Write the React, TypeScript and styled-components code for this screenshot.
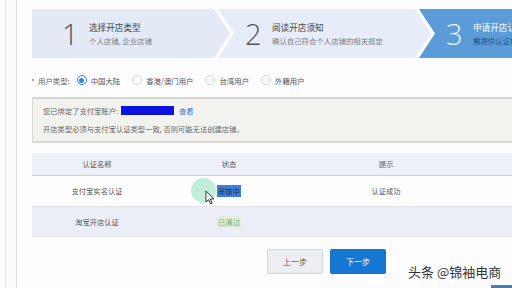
import React from "react";
import styled, { createGlobalStyle } from "styled-components";

const Global = createGlobalStyle`
  html, body { margin: 0; padding: 0; background: #fdfcfe; }
  body {
    width: 512px; height: 288px; overflow: hidden;
    font-family: "Noto Sans CJK SC", "Noto Sans", sans-serif;
    color: #555;
  }
  * { box-sizing: border-box; }
`;

const Page = styled.div`
  position: relative;
  display: flex;
  width: 512px;
  height: 288px;
  overflow: hidden;
`;

const Rail = styled.div`
  flex: 0 0 32px;
  padding-left: 5px;
`;

const RailInner = styled.div`
  width: 12px;
  height: 100%;
  border-left: 1px solid #e2e2e6;
  border-right: 1px solid #dcdce2;
  background: #fbfbfc;
`;

const Main = styled.div`
  flex: 1;
  min-width: 0;
  padding-top: 9px;
  display: flex;
  flex-direction: column;
`;

const Steps = styled.div`
  display: flex;
  height: 49px;
  width: 520px;
`;

const Step = styled.div<{ $w: number; $first?: boolean; $active?: boolean; $bg: string }>`
  flex: 0 0 ${(p) => p.$w}px;
  margin-left: ${(p) => (p.$first ? 0 : -12)}px;
  height: 100%;
  background: ${(p) => p.$bg};
  display: flex;
  align-items: center;
  padding-left: ${(p) => (p.$first ? 30 : 27)}px;
  clip-path: ${(p) =>
    p.$first
      ? "polygon(0 0, calc(100% - 16px) 0, 100% 50%, calc(100% - 16px) 100%, 0 100%)"
      : "polygon(0 0, calc(100% - 16px) 0, 100% 50%, calc(100% - 16px) 100%, 0 100%, 16px 50%)"};
`;

const StepNum = styled.div<{ $active?: boolean }>`
  font-family: "Open Sans", "Noto Sans", sans-serif;
  font-weight: 300;
  font-size: 29px;
  line-height: 1;
  width: 19px;
  margin-right: 8px;
  color: ${(p) => (p.$active ? "#e6f3ff" : "#555")};
`;

const StepText = styled.div`
  display: flex;
  flex-direction: column;
  gap: 3px;
  white-space: nowrap;
`;

const StepTitle = styled.div<{ $active?: boolean }>`
  font-size: 8.6px;
  line-height: 11px;
  color: ${(p) => (p.$active ? "#ffffff" : "#444")};
`;

const StepSub = styled.div<{ $active?: boolean }>`
  font-size: 7.4px;
  line-height: 10px;
  color: ${(p) => (p.$active ? "#234f86" : "#7a7a80")};
`;

const TypeRow = styled.div`
  margin-top: 14px;
  height: 16px;
  display: flex;
  align-items: center;
  font-size: 7.4px;
  color: #555;
  white-space: nowrap;
`;

const Bullet = styled.span`
  width: 2px;
  height: 2px;
  border-radius: 50%;
  background: #888;
  margin-right: 4px;
`;

const TypeLabel = styled.span`
  margin-right: 7px;
  color: #666;
`;

const RadioItem = styled.label<{ $gap: number }>`
  display: flex;
  align-items: center;
  margin-right: ${(p) => p.$gap}px;
`;

const Radio = styled.span<{ $on?: boolean }>`
  width: 10px;
  height: 10px;
  border-radius: 50%;
  border: 1px solid ${(p) => (p.$on ? "#2f86e0" : "#d4d6da")};
  margin-right: 4px;
  display: flex;
  align-items: center;
  justify-content: center;
  &::after {
    content: "";
    width: 5px;
    height: 5px;
    border-radius: 50%;
    background: ${(p) => (p.$on ? "#2f86e0" : "transparent")};
  }
`;

const Notice = styled.div`
  margin-top: 9px;
  height: 46px;
  width: 500px;
  background: #f2f3ee;
  border-top: 2px solid #d4d6cf;
  border-bottom: 2px solid #d9dbd4;
  border-left: 1px solid #d8dad3;
  padding: 5px 0 0 10px;
  font-size: 7.3px;
  color: #666;
  display: flex;
  flex-direction: column;
  gap: 5px;
`;

const NoticeLine = styled.div`
  display: flex;
  align-items: center;
  height: 13px;
  white-space: nowrap;
`;

const Masked = styled.span`
  display: inline-block;
  width: 53px;
  height: 9px;
  background: #0a14dc;
  margin: 0 5px 0 3px;
`;

const Link = styled.span`
  color: #3b80d0;
`;

const Table = styled.div`
  margin-top: 10px;
  width: 490px;
  font-size: 7.3px;
  color: #555;
`;

const Row = styled.div<{ $bg: string; $h: number; $line?: boolean }>`
  display: grid;
  grid-template-columns: 130px 134px 180px 1fr;
  height: ${(p) => p.$h}px;
  background: ${(p) => p.$bg};
  border-bottom: 1px solid ${(p) => (p.$line ? "#cfd0d6" : "#e3e4ea")};
  align-items: center;
`;

const Cell = styled.div`
  text-align: center;
  white-space: nowrap;
`;

const Selected = styled.span`
  background: #3d7fd6;
  color: #1d3550;
  padding: 1px 1px;
`;

const Passed = styled.span`
  color: #7fb35f;
  background: #e3eddc;
  padding: 1px 1px;
`;

const Buttons = styled.div`
  margin-top: 12px;
  padding-left: 235px;
  display: flex;
  gap: 7px;
`;

const Btn = styled.button<{ $primary?: boolean }>`
  width: 56px;
  height: 25px;
  font-family: "Noto Sans CJK SC", sans-serif;
  font-size: 8px;
  border-radius: 2px;
  border: 1px solid ${(p) => (p.$primary ? "#1670c8" : "#d3d6de")};
  background: ${(p) => (p.$primary ? "#1778d4" : "#eceef4")};
  color: ${(p) => (p.$primary ? "#ffffff" : "#555")};
  padding: 0;
`;

const Watermark = styled.div`
  position: absolute;
  left: 408px;
  top: 263px;
  font-size: 13px;
  line-height: 18px;
  color: #333;
  white-space: nowrap;
  text-shadow: 0 0 2px #fff, 0 0 2px #fff;
`;

const CornerBar = styled.div`
  position: absolute;
  left: 491px;
  top: 285px;
  width: 21px;
  height: 3px;
  background: #4b7fae;
`;

const Halo = styled.div`
  position: absolute;
  left: 191px;
  top: 178px;
  width: 25px;
  height: 25px;
  border-radius: 50%;
  background: rgba(160, 228, 200, 0.65);
`;

const Cursor = styled.svg`
  position: absolute;
  left: 205px;
  top: 190px;
`;

export default function App() {
  return (
    <>
      <Global />
      <Page>
        <Rail>
          <RailInner />
        </Rail>
        <Main>
          <Steps>
            <Step $first $w={198} $bg="#e3eaf6">
              <StepNum>1</StepNum>
              <StepText>
                <StepTitle>选择开店类型</StepTitle>
                <StepSub>个人店铺, 企业店铺</StepSub>
              </StepText>
            </Step>
            <Step $w={213} $bg="#e7edf8">
              <StepNum>2</StepNum>
              <StepText>
                <StepTitle>阅读开店须知</StepTitle>
                <StepSub>确认自己符合个人店铺的相关规定</StepSub>
              </StepText>
            </Step>
            <Step $w={130} $bg="#5b9bd7">
              <StepNum $active>3</StepNum>
              <StepText>
                <StepTitle $active>申请开店认证</StepTitle>
                <StepSub $active>需提供认证相关资料</StepSub>
              </StepText>
            </Step>
          </Steps>

          <TypeRow>
            <Bullet />
            <TypeLabel>用户类型:</TypeLabel>
            <RadioItem $gap={12}>
              <Radio $on />
              中国大陆
            </RadioItem>
            <RadioItem $gap={12}>
              <Radio />
              香港/澳门用户
            </RadioItem>
            <RadioItem $gap={12}>
              <Radio />
              台湾用户
            </RadioItem>
            <RadioItem $gap={0}>
              <Radio />
              外籍用户
            </RadioItem>
          </TypeRow>

          <Notice>
            <NoticeLine>
              您已绑定了支付宝账户:
              <Masked />
              <Link>查看</Link>
            </NoticeLine>
            <NoticeLine>开店类型必须与支付宝认证类型一致, 否则可能无法创建店铺。</NoticeLine>
          </Notice>

          <Table>
            <Row $bg="#eef0f8" $h={23} $line>
              <Cell>认证名称</Cell>
              <Cell>状态</Cell>
              <Cell>提示</Cell>
              <Cell />
            </Row>
            <Row $bg="#fefeff" $h={31}>
              <Cell>支付宝实名认证</Cell>
              <Cell>
                <Selected>审核中</Selected>
              </Cell>
              <Cell>认证成功</Cell>
              <Cell />
            </Row>
            <Row $bg="#eceef7" $h={30}>
              <Cell>淘宝开店认证</Cell>
              <Cell>
                <Passed>已通过</Passed>
              </Cell>
              <Cell />
              <Cell />
            </Row>
          </Table>

          <Buttons>
            <Btn>上一步</Btn>
            <Btn $primary>下一步</Btn>
          </Buttons>
        </Main>

        <Halo />
        <Cursor width="10" height="15" viewBox="0 0 10 15">
          <path d="M1 1 L1 12 L3.6 9.6 L5.6 14 L7.2 13.3 L5.3 9 L8.8 9 Z" fill="#fff" stroke="#222" strokeWidth="0.9" strokeLinejoin="round" />
        </Cursor>
        <Watermark>头条 @锦袖电商</Watermark>
        <CornerBar />
      </Page>
    </>
  );
}
